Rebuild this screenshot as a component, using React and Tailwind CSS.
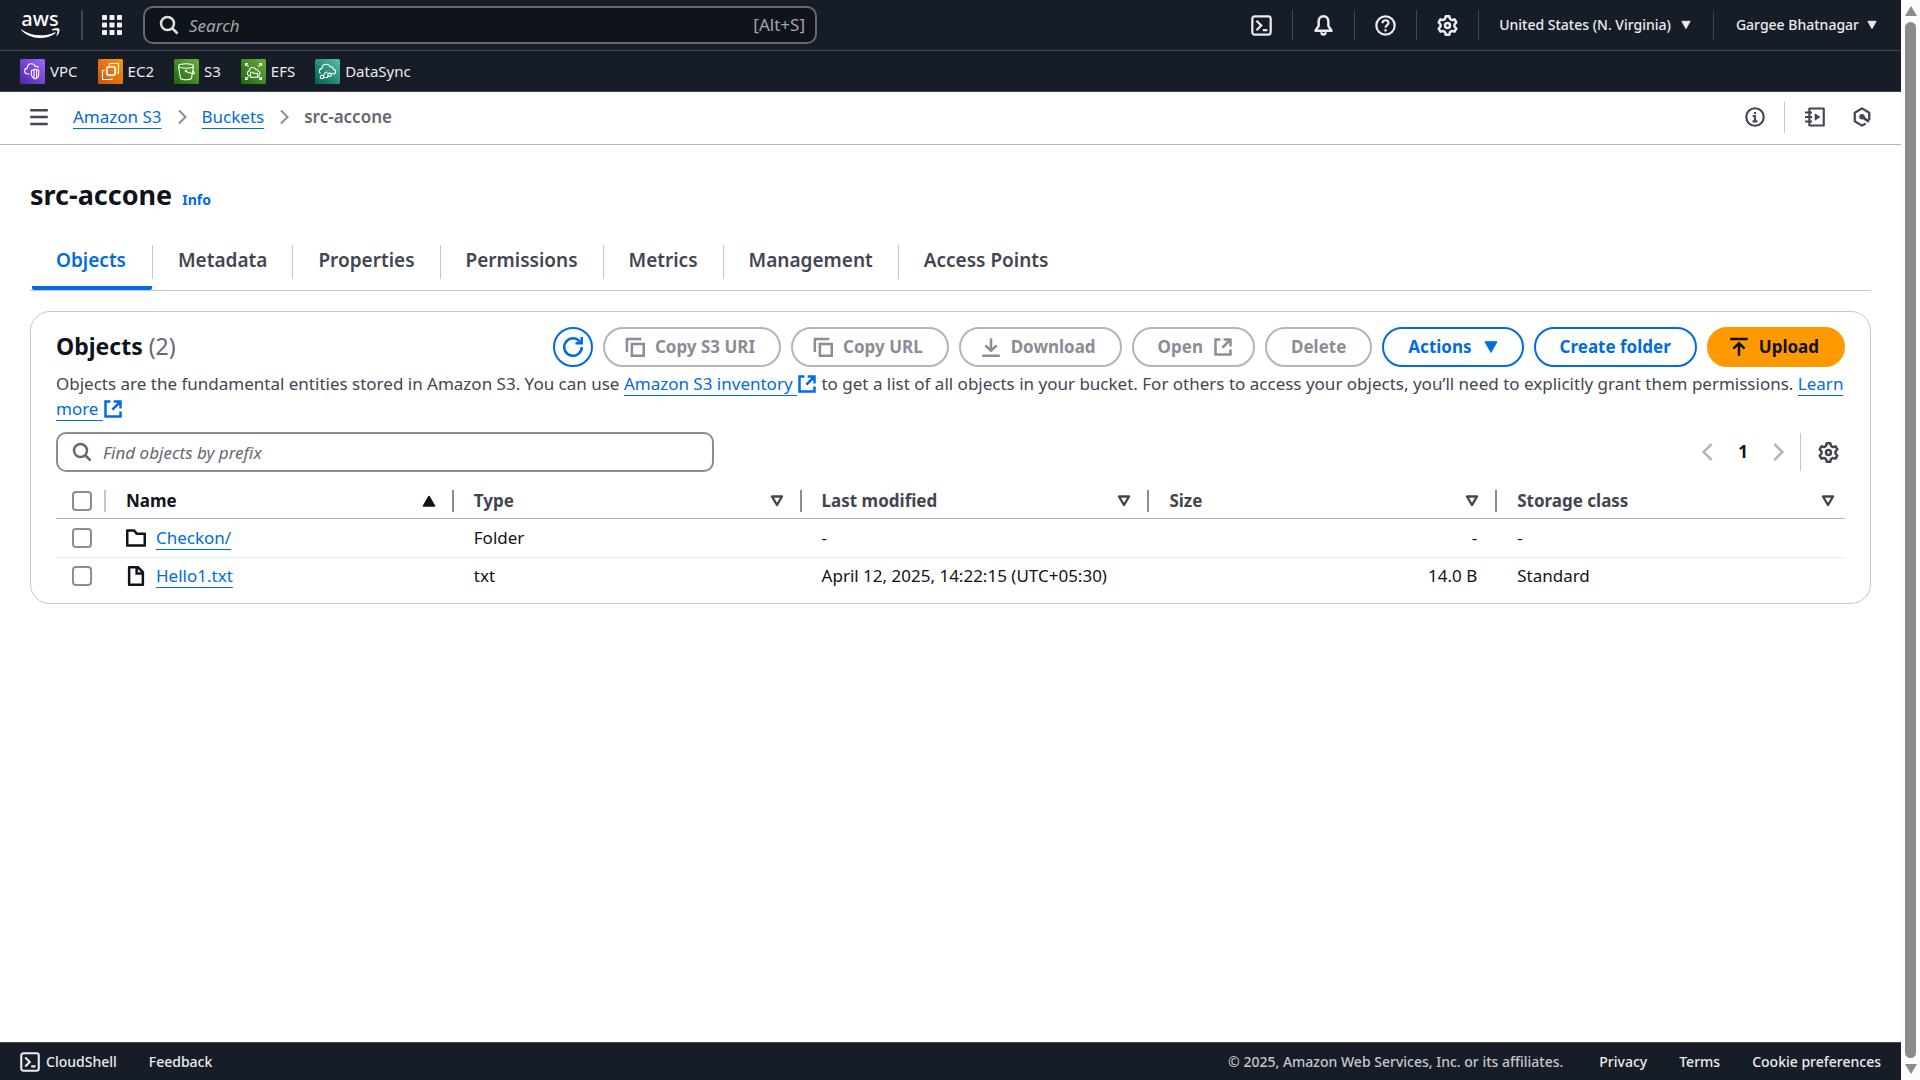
import React from "react";

/* ---------- icons (16-unit grid) ---------- */

function Icon({ className = "size-5", children, width = 2 }) {
  return (
    <svg viewBox="0 0 16 16" fill="none" stroke="currentColor" strokeWidth={width} strokeLinejoin="round" className={className + " shrink-0"} aria-hidden="true">
      {children}
    </svg>
  );
}

const SearchIcon = ({ className }) => (
  <Icon className={className}>
    <circle cx="6.800" cy="6.800" r="5.200" />
    <path d="m10.600 10.600 4.200 4.200" />
  </Icon>
);

const TerminalIcon = ({ className }) => (
  <Icon className={className} width={1.7}>
    <rect x="1" y="1" width="14" height="14" rx="1.8" />
    <path d="m4.2 4.4 3.6 3.6-3.6 3.6M9 11.5h3.4" strokeLinejoin="miter" />
  </Icon>
);

const BellIcon = ({ className }) => (
  <Icon className={className} width={1.9}>
    <path d="M8 1C5.6 1 4.3 2.9 4.3 5.1v3.2L1.9 12h12.2l-2.4-3.7V5.1C11.700 2.900 10.400 1 8 1Z" />
    <path d="M6.400 13.200c0 1 .7 1.600 1.600 1.600s1.600-.6 1.600-1.600" />
  </Icon>
);

const HelpIcon = ({ className }) => (
  <Icon className={className} width={1.7}>
    <circle cx="8" cy="8" r="7" />
    <path d="M5.700 6.300C5.700 4.900 6.700 4 8 4s2.300.9 2.300 2.100c0 1.700-2.300 1.700-2.300 3.600M8 10.800v1.700" />
  </Icon>
);

const InfoIcon = ({ className }) => (
  <Icon className={className} width={1.7}>
    <circle cx="8" cy="8" r="7" />
    <path d="M6.200 7.200H8v4.300M6 11.500h4M8 4v1.600" />
  </Icon>
);

const gearPath =
  Array.from({ length: 6 }, (_, i) => {
    const at = (deg, r) => {
      const a = ((deg + i * 60 - 90) * Math.PI) / 180;
      return (8 + r * Math.cos(a)).toFixed(2) + " " + (8 + r * Math.sin(a)).toFixed(2);
    };
    return [at(-20, 5.5), at(-11, 7.1), at(11, 7.1), at(20, 5.5), at(30, 5.2)].join("L");
  }).join("L");

const GearIcon = ({ className }) => (
  <Icon className={className} width={1.9}>
    <path d={"M" + gearPath + "Z"} />
    <circle cx="8" cy="8" r="1.900" />
  </Icon>
);

const NotebookIcon = ({ className }) => (
  <Icon className={className} width={1.7}>
    <path d="M3.500 3V1.200H15v13.600H3.500V13M3.500 3v10" />
    <path d="M0 4.400h5.600M0 8h5.600M0 11.600h5.600" />
    <path d="M8 5.400v5.200L12 8Z" fill="currentColor" strokeWidth="0.500" />
  </Icon>
);

const HexIcon = ({ className }) => (
  <Icon className={className} width={1.800}>
    <path d="M13.800 10.400V4.600L8 1.100 2.200 4.600v6.800L8 14.900l2.900-1.700" />
    <circle cx="8" cy="7.800" r="1.700" fill="currentColor" strokeWidth="1" />
    <path d="m9 8.500 4.600 3.300" strokeWidth="2.200" />
  </Icon>
);

const ExternalIcon = ({ className }) => (
  <Icon className={className}>
    <path d="M6 2H2v12h12v-4" strokeLinejoin="miter" />
    <path d="M8.500 2H14v5.500M14 2 7.500 8.500" strokeLinejoin="miter" />
  </Icon>
);

const CopyIcon = ({ className }) => (
  <Icon className={className}>
    <path d="M1.500 12V1.500H13M5.500 5.500H15V15H5.500z" strokeLinejoin="miter" />
  </Icon>
);

const DownloadIcon = ({ className }) => (
  <Icon className={className}>
    <path d="M8 1v10M3.500 6.700 8 11l4.500-4.300M1 15h14" strokeLinejoin="miter" />
  </Icon>
);

const UploadIcon = ({ className }) => (
  <Icon className={className}>
    <path d="M8 15V5M3.500 9.300 8 5l4.500 4.300M1 1.500h14" strokeLinejoin="miter" />
  </Icon>
);

const RefreshIcon = ({ className }) => (
  <Icon className={className}>
    <path d="M15 8a7 7 0 1 1-2.600-5.400L14 4.500" />
    <path d="M10 5h5V0" strokeLinejoin="miter" />
  </Icon>
);

const MenuIcon = ({ className }) => (
  <Icon className={className}>
    <path d="M1 2.500h14M1 8h14M1 13.500h14" />
  </Icon>
);

const ChevronRight = ({ className }) => (
  <Icon className={className}>
    <path d="m5 1.500 6.500 6.500L5 14.500" strokeLinejoin="miter" />
  </Icon>
);

const ChevronLeft = ({ className }) => (
  <Icon className={className}>
    <path d="M11 1.500 4.500 8l6.500 6.500" strokeLinejoin="miter" />
  </Icon>
);

const FolderIcon = ({ className }) => (
  <Icon className={className}>
    <path d="M1 14V2h5.500l2 2.500H15V14Z" />
  </Icon>
);

const FileIcon = ({ className }) => (
  <Icon className={className}>
    <path d="M2.500 1h7l4 4v10h-11Z" />
    <path d="M8.500 1v5h5" strokeLinejoin="miter" />
  </Icon>
);

const CaretDown = ({ className }) => (
  <svg viewBox="0 0 12 12" className={className + " shrink-0"} fill="currentColor" aria-hidden="true">
    <path d="M1 1.500h10L6 10.500Z" stroke="currentColor" strokeWidth="1" strokeLinejoin="round" />
  </svg>
);

const SortOpen = () => (
  <svg viewBox="0 0 14 14" className="size-3.5 shrink-0" fill="none" stroke="currentColor" strokeWidth="2.400" strokeLinejoin="round" aria-hidden="true">
    <path d="M2 2.500h10L7 11Z" />
  </svg>
);

const SortUp = () => (
  <svg viewBox="0 0 14 14" className="size-3.5 shrink-0" fill="currentColor" stroke="currentColor" strokeWidth="1.500" strokeLinejoin="round" aria-hidden="true">
    <path d="M1.500 12h11L7 2.500Z" />
  </svg>
);

const AppsIcon = () => (
  <svg viewBox="0 0 20 20" className="size-5" fill="currentColor" aria-hidden="true">
    {[0, 7.500, 15].map((y) => [0, 7.500, 15].map((x) => <rect key={x + "-" + y} x={x} y={y} width="5" height="5" rx="0.800" />))}
  </svg>
);

/* ---------- service favourites ---------- */

function ServiceTile({ from, to, id, children }) {
  return (
    <svg viewBox="0 0 25 25" className="size-[25px] shrink-0" fill="none" stroke="#fff" strokeWidth="1.1" strokeLinejoin="round" aria-hidden="true">
      <defs>
        <linearGradient id={id} x1="0" y1="1" x2="1" y2="0">
          <stop offset="0" stopColor={from} />
          <stop offset="1" stopColor={to} />
        </linearGradient>
      </defs>
      <rect width="25" height="25" rx="1.500" fill={"url(#" + id + ")"} stroke="none" />
      {children}
    </svg>
  );
}

const services = [
  {
    name: "VPC",
    icon: (
      <ServiceTile id="vpc" from="#4d27a8" to="#a166ff">
        <path d="M9.500 15H8c-2 0-3.300-1.200-3.300-3 0-1.700 1.100-2.700 2.600-2.900C7.300 6.500 9 4.700 11.400 4.700c1.900 0 3.200 1 4 2.700 1.600-.4 2.800.3 3 1.800" />
        <path d="M15.300 10.200 18.800 11.600v3.600c0 2-1.300 3.700-3.500 4.800-2.200-1.100-3.900-2.800-3.900-4.800v-3.600Z" />
        <path d="M14 11v8M16.600 11v8" />
      </ServiceTile>
    ),
  },
  {
    name: "EC2",
    icon: (
      <ServiceTile id="ec2" from="#c8511b" to="#ff9900">
        <path d="M11.500 6V4.500h9V14H19" />
        <path d="M6.500 11.500h-2v9h9.500V19" />
        <rect x="9" y="8" width="8" height="8" rx="0.800" strokeWidth="1.500" />
        <path d="M11 6.500V8M13 6.500V8M15 6.500V8M11 16v1.500M13 16v1.500M15 16v1.500M7.500 10H9M7.500 12H9M7.500 14H9M17 10h1.500M17 12h1.500M17 14h1.500" strokeWidth="0.800" />
      </ServiceTile>
    ),
  },
  {
    name: "S3",
    icon: (
      <ServiceTile id="s3" from="#1b660f" to="#6cae3e">
        <ellipse cx="12" cy="7" rx="7.500" ry="2.200" />
        <path d="m4.500 7 1.900 12c.3 1 2.700 1.700 5.600 1.700s5.300-.7 5.600-1.700L19.500 7" />
        <path d="M12 12.200c3 1.800 8 3.200 8.500 1.800.2-.7-1-1.500-2-2" />
        <circle cx="12" cy="12" r="0.700" fill="#fff" />
      </ServiceTile>
    ),
  },
  {
    name: "EFS",
    icon: (
      <ServiceTile id="efs" from="#1b660f" to="#6cae3e">
        <path d="M4.500 7V4.500H7M18 4.500h2.500V7M20.500 18v2.500H18M7 20.500H4.500V18M4.500 4.500 7.500 7.500M20.500 4.500l-3 3M20.500 20.500l-3-3M4.500 20.500l3-3" />
        <path d="M8.800 16.500H8.200c-1.300-.2-2-1.100-2-2.200 0-1.200.8-2 2-2.200.1-2.200 1.500-3.600 3.500-3.600 1.500 0 2.600.8 3.200 2.100 1.300-.3 2.200.5 2.300 1.700 1.200.3 1.700 1.100 1.700 2.100s-.6 2.100-1.500 2.100" />
        <path d="M9.500 18.300v-5h2.300l.8 1h3.900v4Z" />
      </ServiceTile>
    ),
  },
  {
    name: "DataSync",
    icon: (
      <ServiceTile id="datasync" from="#055f4e" to="#56c0a7">
        <path d="M5.500 14.500c-.7-.6-1.100-1.300-1.100-2.200 0-1.600 1.100-2.700 2.600-2.900C7 6.800 8.900 5.200 11.300 5.200c1.900 0 3.300 1 4.100 2.700 1.600-.4 2.900.6 3 2.200 1.500.3 2.200 1.300 2.200 2.500 0 1.500-1.100 2.600-2.800 2.600" />
        <circle cx="7" cy="18" r="1.700" />
        <circle cx="14.500" cy="15.800" r="1.700" />
        <path d="M8.300 16.800 10.500 13.200h2M8.700 18.500H12l1.300-1.300M16 15l1.500-1" />
      </ServiceTile>
    ),
  },
];

/* ---------- page parts ---------- */

const iconButtons = [
  { label: "CloudShell", Glyph: TerminalIcon },
  { label: "Notifications", Glyph: BellIcon },
  { label: "Help", Glyph: HelpIcon },
  { label: "Settings", Glyph: GearIcon },
];

function TopNav() {
  return (
    <header className="bg-[#161d26] text-[#ebebf0]">
      <div className="flex h-[51px] items-center border-b border-[#424650]">
        <a href="#" aria-label="AWS home" className="ml-5 flex w-10 flex-col items-center text-white">
          <span className="h-4 text-[20px] leading-[14px] font-medium">aws</span>
          <svg viewBox="0 0 40 11" className="h-[11px] w-10" fill="currentColor" aria-hidden="true">
            <path d="M1 1.200C6.500 5 13 7.300 20.500 7.300c5 0 9.800-1 14-2.900.8-.3 1.400.5.6 1.100C31 8.500 25.500 10 20 10 12.500 10 6 7.200 1 2Z" />
            <path d="M32 1.500c2-1.300 6.500-1.500 7.300-.6.700 1-.3 5-2.300 6.900-.4.300-.8.100-.6-.4.600-1.400 1.400-3.900 1-4.700-.5-.7-3.400-.5-4.900-.3-.5 0-.9-.5-.5-.9Z" />
          </svg>
        </a>
        <div className="ml-[21px] h-[30px] w-0.5 bg-[#424650]" />
        <button type="button" aria-label="Services" className="ml-[19px] text-[#f3f3f7]">
          <AppsIcon />
        </button>
        <label className="ml-[21px] flex h-[38px] w-[35.500%] max-w-[674px] items-center rounded-[10px] border-2 border-[#656871] bg-[#0f141a] pr-2.5 pl-3.5">
          <SearchIcon className="size-5 text-[#dedee3]" />
          <span className="sr-only">Search services</span>
          <input type="text" placeholder="Search" className="ml-2 h-full min-w-0 flex-1 bg-transparent pl-0.5 text-[17px] italic outline-none placeholder:text-[#a4a4ad]" />
          <span className="text-[17px] text-[#a4a4ad]">[Alt+S]</span>
        </label>
        <div className="ml-auto flex items-center">
          {iconButtons.map(({ label, Glyph }) => (
            <div key={label} className="flex items-center">
              <button type="button" aria-label={label} className="px-5">
                <Glyph className="size-[21px]" />
              </button>
              <div className="h-[30px] w-px bg-[#424650]" />
            </div>
          ))}
          <button type="button" className="ml-5 flex items-center text-sm font-medium">
            United States (N. Virginia)
            <CaretDown className="ml-2.5 size-2.5" />
          </button>
          <div className="mx-[22px] h-7 w-px bg-[#424650]" />
          <button type="button" className="mr-6 flex items-center text-sm font-medium">
            Gargee Bhatnagar
            <CaretDown className="ml-2 size-2.5" />
          </button>
        </div>
      </div>
      <nav aria-label="Favorites" className="flex h-[41px] items-center gap-5 border-b border-[#424650] px-5">
        {services.map((s) => (
          <a key={s.name} href="#" className="flex items-center gap-[5px] text-[15px]">
            {s.icon}
            {s.name}
          </a>
        ))}
      </nav>
    </header>
  );
}

const linkClass = "text-[#006ce0] underline decoration-1 underline-offset-[5px]";

function Breadcrumbs() {
  return (
    <div className="flex h-[53px] items-center border-b border-[#b4b4bb] px-[29px] pb-0.5 text-[17px] text-[#424650]">
      <button type="button" aria-label="Open navigation">
        <MenuIcon className="size-5" />
      </button>
      <nav aria-label="Breadcrumb" className="ml-6 flex items-center gap-3">
        <a href="#" className={linkClass}>Amazon S3</a>
        <ChevronRight className="size-4 text-[#8c8c94]" />
        <a href="#" className={linkClass}>Buckets</a>
        <ChevronRight className="size-4 text-[#8c8c94]" />
        <span className="font-semibold text-[#656871]">src-accone</span>
      </nav>
      <div className="ml-auto flex items-center">
        <button type="button" aria-label="Information">
          <InfoIcon className="size-5" />
        </button>
        <div className="mr-5 ml-[19px] h-[31px] w-px bg-[#c6c6cd]" />
        <button type="button" aria-label="Tutorials">
          <NotebookIcon className="size-5" />
        </button>
        <button type="button" aria-label="Diagnostics" className="ml-[27px]">
          <HexIcon className="size-5" />
        </button>
      </div>
    </div>
  );
}

const tabs = ["Objects", "Metadata", "Properties", "Permissions", "Metrics", "Management", "Access Points"];

function Tabs() {
  return (
    <div role="tablist" className="flex h-14 border-b border-[#c6c6cd] text-[19px] font-semibold text-[#424650]">
      {tabs.map((t, i) => (
        <div key={t} className="flex">
          <button
            type="button"
            role="tab"
            aria-selected={i === 0}
            className={
              i === 0
                ? "ml-0.5 rounded-b-[2px] border-b-4 border-[#006ce0] pr-[26px] pl-6 text-[#006ce0]"
                : "border-b-4 border-transparent px-[25px]"
            }
          >
            {t}
          </button>
          {i < tabs.length - 1 && <div className="mt-2.5 h-[34px] w-px bg-[#c6c6cd]" />}
        </div>
      ))}
    </div>
  );
}

const pill = "flex h-10 items-center justify-center rounded-full border-2 text-[17px] font-bold whitespace-nowrap";
const disabledPill = pill + " border-[#b4b4bb] text-[#8c8c94]";
const bluePill = pill + " border-[#006ce0] text-[#006ce0]";

function ActionBar() {
  return (
    <div className="flex flex-wrap items-center gap-2.5">
      <button type="button" aria-label="Refresh" className={bluePill + " w-10"}>
        <RefreshIcon className="size-5" />
      </button>
      <button type="button" disabled className={disabledPill + " gap-2.5 pr-6 pl-5"}>
        <CopyIcon className="size-5" />
        Copy S3 URI
      </button>
      <button type="button" disabled className={disabledPill + " gap-2.5 pr-6 pl-5"}>
        <CopyIcon className="size-5" />
        Copy URL
      </button>
      <button type="button" disabled className={disabledPill + " gap-2.5 pr-6 pl-5"}>
        <DownloadIcon className="size-5" />
        Download
      </button>
      <button type="button" disabled className={disabledPill + " gap-2.5 pr-5 pl-6"}>
        Open
        <ExternalIcon className="size-5" />
      </button>
      <button type="button" disabled className={disabledPill + " px-6"}>
        Delete
      </button>
      <button type="button" className={bluePill + " gap-3 px-6"}>
        Actions
        <CaretDown className="size-3.5" />
      </button>
      <button type="button" className={bluePill + " px-6"}>
        Create folder
      </button>
      <button type="button" className={pill + " gap-2.5 border-[#ff9900] bg-[#ff9900] pr-6 pl-5 text-[#0f141a]"}>
        <UploadIcon className="size-5" />
        Upload
      </button>
    </div>
  );
}

function Tick({ label }) {
  return (
    <input
      type="checkbox"
      aria-label={label}
      className="block size-5 appearance-none rounded-[4px] border-2 border-[#8c8c94] bg-white checked:bg-[#006ce0]"
    />
  );
}

const columns = ["Name", "Type", "Last modified", "Size", "Storage class"];
const rows = [
  { name: "Checkon/", Glyph: FolderIcon, type: "Folder", modified: "-", size: "-", storage: "-" },
  { name: "Hello1.txt", Glyph: FileIcon, type: "txt", modified: "April 12, 2025, 14:22:15 (UTC+05:30)", size: "14.0 B", storage: "Standard" },
];

function ObjectsTable() {
  return (
    <table className="mt-3 w-full table-fixed border-collapse text-left text-[17px] leading-[22px] text-[#0f141a]">
      <colgroup>
        <col className="w-[50px]" />
        {columns.map((c) => (
          <col key={c} />
        ))}
      </colgroup>
      <thead>
        <tr className="h-[34px] border-b border-[#b4b4bb] text-[#424650]">
          <th className="p-0">
            <div className="flex h-[22px] items-center border-r-2 border-[#c6c6cd] pl-4">
              <Tick label="Select all objects" />
            </div>
          </th>
          {columns.map((c, i) => (
            <th key={c} scope="col" aria-sort={i === 0 ? "ascending" : undefined} className={i === 0 ? "p-0 font-bold text-[#0f141a]" : "p-0 font-bold"}>
              <button
                type="button"
                className={
                  i < columns.length - 1
                    ? "flex h-[22px] w-full items-center justify-between border-r-2 border-[#8c8c94] pr-4 pl-5"
                    : "flex h-[22px] w-full items-center justify-between pr-2.5 pl-5"
                }
              >
                {c}
                {i === 0 ? <SortUp /> : <SortOpen />}
              </button>
            </th>
          ))}
        </tr>
      </thead>
      <tbody>
        {rows.map((r) => (
          <tr key={r.name} className="h-[39px] border-b border-[#ebebf0] last:h-[38px] last:border-0">
            <td className="p-0 pl-4">
              <Tick label={"Select " + r.name} />
            </td>
            <td className="p-0 pl-5">
              <div className="flex items-center gap-2.5">
                <r.Glyph className="size-5" />
                <a href="#" className={linkClass}>{r.name}</a>
              </div>
            </td>
            <td className="p-0 pl-5">{r.type}</td>
            <td className="p-0 pl-5">{r.modified}</td>
            <td className="p-0 pr-5 text-right">{r.size}</td>
            <td className="p-0 pl-5">{r.storage}</td>
          </tr>
        ))}
      </tbody>
    </table>
  );
}

function ObjectsCard() {
  return (
    <section className="mt-5 rounded-[20px] border border-[#c6c6cd] px-[25px] pt-[15px] pb-2">
      <div className="flex items-center justify-between">
        <h2 className="pb-0.5 text-[23px] leading-[30px] font-bold text-[#0f141a]">
          Objects <span className="font-normal text-[#656871]">(2)</span>
        </h2>
        <ActionBar />
      </div>
      <p className="mt-1 text-[17px] leading-[25px] text-[#424650]">
        Objects are the fundamental entities stored in Amazon S3. You can use{" "}
        <a href="#" className={linkClass}>
          Amazon S3 inventory{" "}
          <ExternalIcon className="inline size-5 align-[-4px]" />
        </a>{" "}
        to get a list of all objects in your bucket. For others to access your objects, you’ll need to explicitly grant them permissions.{" "}
        <a href="#" className={linkClass}>
          Learn more{" "}
          <ExternalIcon className="inline size-5 align-[-4px]" />
        </a>
      </p>
      <div className="mt-[11px] flex items-center justify-between">
        <label className="flex h-10 w-[36.800%] items-center rounded-[10px] border-2 border-[#8c8c94] px-3.5">
          <SearchIcon className="size-5 text-[#656871]" />
          <span className="sr-only">Find objects</span>
          <input type="text" placeholder="Find objects by prefix" className="ml-2 h-full min-w-0 flex-1 bg-transparent pl-[3px] text-[17px] italic outline-none placeholder:text-[#656871]" />
        </label>
        <div className="flex items-center pr-1.5">
          <button type="button" aria-label="Previous page" disabled className="text-[#b4b4bb]">
            <ChevronLeft className="size-5" />
          </button>
          <button type="button" aria-current="page" className="w-[50px] text-[17px] font-bold text-[#0f141a]">1</button>
          <button type="button" aria-label="Next page" disabled className="text-[#b4b4bb]">
            <ChevronRight className="size-5" />
          </button>
          <div className="mr-[17px] ml-3 h-[38px] w-px bg-[#c6c6cd]" />
          <button type="button" aria-label="Preferences" className="text-[#424650]">
            <GearIcon className="size-[21px]" />
          </button>
        </div>
      </div>
      <ObjectsTable />
    </section>
  );
}

function Footer() {
  return (
    <footer className="flex h-[38px] items-center border-t border-[#424650] bg-[#161d26] px-5 text-sm font-medium text-[#ebebf0]">
      <button type="button" className="flex items-center gap-1.5">
        <TerminalIcon className="size-5" />
        CloudShell
      </button>
      <button type="button" className="ml-8">Feedback</button>
      <span className="ml-auto text-[#c6c6cd]">© 2025, Amazon Web Services, Inc. or its affiliates.</span>
      <a href="#" className="ml-9">Privacy</a>
      <a href="#" className="ml-8">Terms</a>
      <a href="#" className="ml-8">Cookie preferences</a>
    </footer>
  );
}

function ScrollRail() {
  return (
    <div className="flex w-[19px] flex-col items-center bg-[#fcfcfc] py-1.5 text-[#8b8b8b]" aria-hidden="true">
      <svg viewBox="0 0 12 10" className="h-2.5 w-3" fill="currentColor">
        <path d="M6 0 12 10H0Z" />
      </svg>
      <div className="my-1.5 w-[11px] flex-1 rounded-full bg-[#8b8b8b]" />
      <svg viewBox="0 0 12 10" className="h-2.5 w-3" fill="currentColor">
        <path d="M6 10 12 0H0Z" />
      </svg>
    </div>
  );
}

export default function App() {
  return (
    <div className="flex h-screen bg-white font-['Noto_Sans',sans-serif]">
      <div className="flex min-w-0 flex-1 flex-col">
        <TopNav />
        <Breadcrumbs />
        <main className="min-h-0 flex-1 overflow-hidden px-[30px] pt-[30px]">
          <div className="flex items-baseline gap-2.5">
            <h1 className="text-[27px] leading-10 font-bold text-[#0f141a]">src-accone</h1>
            <a href="#" className="text-sm font-bold text-[#006ce0]">Info</a>
          </div>
          <div className="mt-5">
            <Tabs />
          </div>
          <ObjectsCard />
        </main>
        <Footer />
      </div>
      <ScrollRail />
    </div>
  );
}
